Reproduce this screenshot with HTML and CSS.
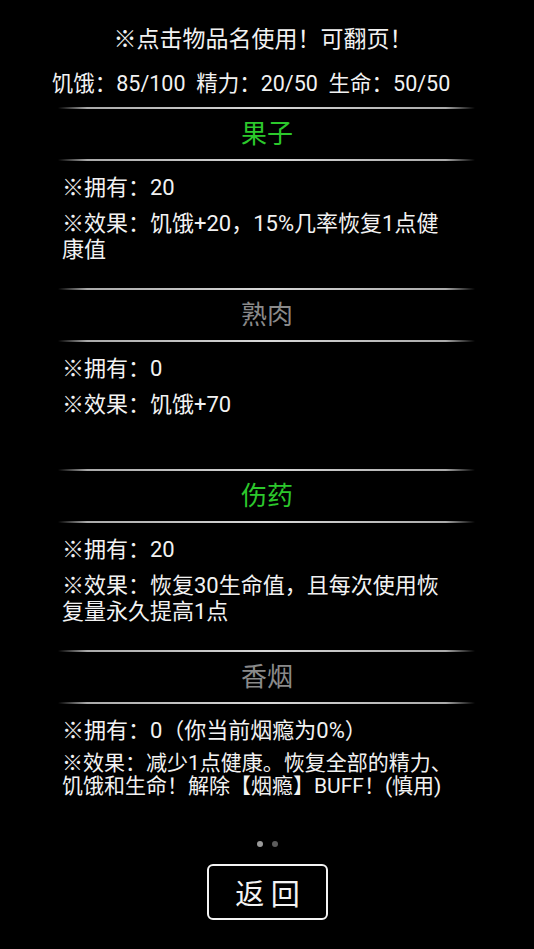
FILE: index.html
```html
<!DOCTYPE html>
<html lang="zh-CN">
<head>
<meta charset="utf-8">
<title>物品</title>
<link rel="stylesheet" href="styles.css">
</head>
<body>
<div class="screen">
  <header class="head">
    <div class="tip">※点击物品名使用！可翻页！</div>
    <div class="stats">饥饿：85/100&nbsp;&nbsp;精力：20/50&nbsp;&nbsp;生命：50/50</div>
  </header>

  <section class="item">
    <div class="rule"></div>
    <div class="name name-on">果子</div>
    <div class="rule"></div>
    <div class="body">
      <p class="line">※拥有：20</p>
      <p class="line">※效果：饥饿+20，15%几率恢复1点健康值</p>
    </div>
  </section>

  <section class="item">
    <div class="rule"></div>
    <div class="name name-off">熟肉</div>
    <div class="rule"></div>
    <div class="body">
      <p class="line">※拥有：0</p>
      <p class="line">※效果：饥饿+70</p>
    </div>
  </section>

  <section class="item">
    <div class="rule"></div>
    <div class="name name-on">伤药</div>
    <div class="rule"></div>
    <div class="body">
      <p class="line">※拥有：20</p>
      <p class="line">※效果：恢复30生命值，且每次使用恢复量永久提高1点</p>
    </div>
  </section>

  <section class="item">
    <div class="rule"></div>
    <div class="name name-off">香烟</div>
    <div class="rule"></div>
    <div class="body">
      <p class="line">※拥有：0（你当前烟瘾为0%）</p>
      <p class="line line-small">※效果：减少1点健康。恢复全部的精力、饥饿和生命！解除【烟瘾】BUFF！(慎用)</p>
    </div>
  </section>

  <div class="dots">
    <span class="dot dot-active"></span>
    <span class="dot"></span>
  </div>

  <div class="actions">
    <button class="back">返 回</button>
  </div>
</div>
</body>
</html>
```

FILE: styles.css
```css
html, body {
  margin: 0;
  padding: 0;
  background: #000;
}

body {
  font-family: "Roboto", "Noto Sans CJK SC", sans-serif;
  color: #f2f2f2;
}

.screen {
  width: 534px;
  height: 949px;
  display: flex;
  flex-direction: column;
}

.head {
  display: flex;
  flex-direction: column;
  align-items: center;
  padding-top: 25px;
  padding-bottom: 8px;
}

.tip {
  font-size: 23px;
  line-height: 30px;
  padding-right: 8px;
}

.stats {
  font-size: 21.5px;
  line-height: 30px;
  margin-top: 14px;
  padding-right: 32px;
}

.item {
  height: 181px;
  display: flex;
  flex-direction: column;
}

.rule {
  height: 2px;
  margin: 0 59px 0 58px;
  background: linear-gradient(to right, rgba(200,200,200,0), #aaa 7%, #d8d8d8 50%, #aaa 93%, rgba(200,200,200,0));
}

.name {
  height: 50px;
  line-height: 50px;
  text-align: center;
  font-size: 26px;
}

.name-on {
  color: #2cc82c;
}

.name-off {
  color: #8a8a8a;
}

.body {
  padding: 14px 76px 0 62px;
}

.line {
  margin: 0 0 10px 0;
  font-size: 22px;
  line-height: 26px;
}

.line-small {
  font-size: 21px;
  line-height: 23px;
  margin-top: -2px;
}

.dots {
  display: flex;
  justify-content: center;
  gap: 9px;
  padding-top: 10px;
  padding-left: 1px;
}

.dot {
  width: 6px;
  height: 6px;
  border-radius: 50%;
  background: #5c5c5c;
}

.dot-active {
  background: #9a9a9a;
}

.actions {
  display: flex;
  justify-content: center;
  padding-top: 17px;
}

.back {
  width: 121px;
  height: 56px;
  box-sizing: border-box;
  border: 2px solid #f4f4f4;
  border-radius: 6px;
  background: #000;
  color: #f4f4f4;
  font-family: "Noto Sans CJK SC", sans-serif;
  font-size: 29px;
  padding: 0;
  margin-left: 1px;
}
```
